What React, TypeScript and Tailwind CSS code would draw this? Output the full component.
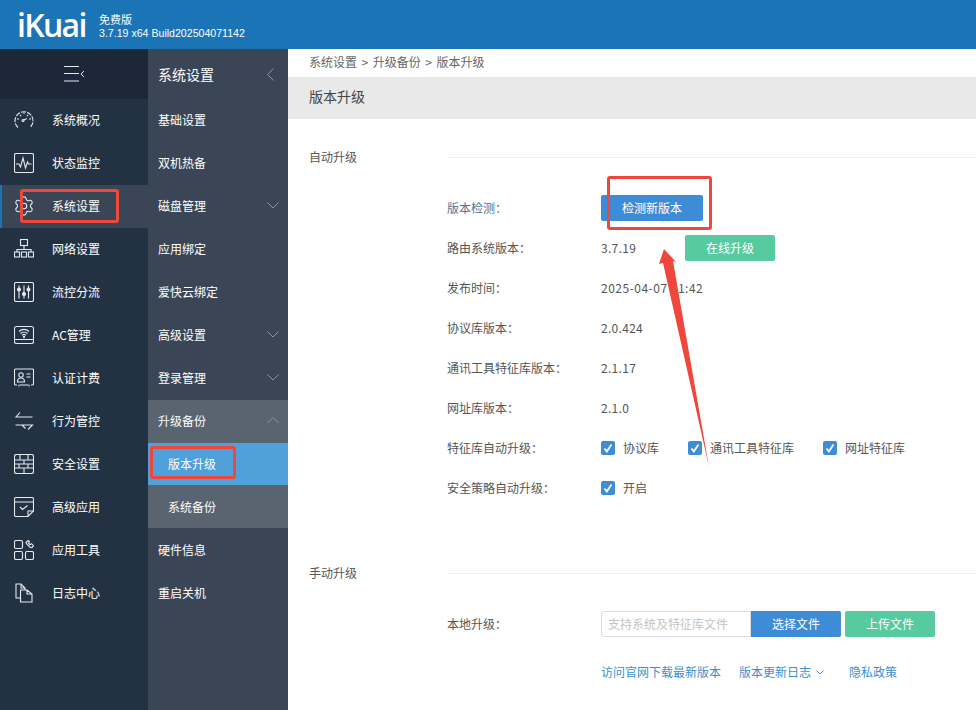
import React from "react";
import { Settings } from "lucide-react";

const S = { fill: "none", stroke: "#e6e9ee", strokeWidth: 1.1 } as const;

function Ico({ children }: { children: React.ReactNode }) {
  return (
    <svg width="20" height="20" viewBox="0 0 20 20" {...S} className="shrink-0">
      {children}
    </svg>
  );
}

const icons: React.ReactNode[] = [
  <Ico key="0"><path d="M4 17.500 A9 9 0 1 1 16 17.500" strokeDasharray="5 1.200" /><path d="M3 9h2M6 5l1.200 1.200M10 2.500V4M14 5l-1 1M17 9h-2" /><circle cx="9" cy="10.500" r="1" /><path d="M9.800 10l3-1.500" /></Ico>,
  <Ico key="1"><rect x="0.500" y="0.500" width="19" height="19" rx="1.500" /><path d="M2 11h3l1.500 3 2.500-9 2.500 10 2-6 1 2h3" /></Ico>,
  <Settings key="2" size={22} strokeWidth={1.2} color="#e6e9ee" className="shrink-0 -mx-[1px]" />,
  <Ico key="3"><rect x="6.500" y="0.500" width="7" height="6" /><path d="M10 6.500v3.500M3 13v-2.500h14V13" /><rect x="0.500" y="13" width="5" height="5" /><rect x="7.500" y="13" width="5" height="5" /><rect x="14.500" y="13" width="5" height="5" /></Ico>,
  <Ico key="4"><rect x="0.500" y="0.500" width="19" height="19" rx="1.500" /><path d="M5 3.500v13M10 3.500v13M14.500 3.500v13" /><circle cx="5" cy="7.500" r="1.500" fill="#e6e9ee" /><circle cx="10" cy="12" r="1.500" fill="#e6e9ee" /><circle cx="14.500" cy="7.500" r="1.500" fill="#e6e9ee" /></Ico>,
  <Ico key="5"><rect x="0.500" y="1.500" width="19" height="17" rx="2" /><path d="M0.500 14.500h19M5 6.500a7 7 0 0 1 10 0M6.500 8.500a5 5 0 0 1 7 0M8 10.300a3 3 0 0 1 4 0" /><circle cx="10" cy="12" r=".6" /></Ico>,
  <Ico key="6"><path d="M3 17H1.500a1 1 0 0 1-1-1V2a1 1 0 0 1 1-1h17a1 1 0 0 1 1 1v14a1 1 0 0 1-1 1H17M6 17h8M5 18.500v-2M15 18.500v-2" /><circle cx="7" cy="7" r="2.200" /><path d="M3.500 14c0-3 1.500-4 3.500-4s3.500 1 3.500 4zM12.500 6h4M12.500 9h4" /></Ico>,
  <Ico key="7"><path d="M6 1.500l-4 4.500h16.500M14 18.500l4.500-4.500H1.500M8 14l3.500 3.500" /></Ico>,
  <Ico key="8"><rect x="0.500" y="0.500" width="19" height="19" rx="2" /><path d="M0.500 6h19M0.500 10h19M0.500 14h19M6 .5V6M14 .5V6M10 6v4M5 10v4M14 10v4M10 14v5.500" /></Ico>,
  <Ico key="9"><path d="M14 19.500H2a1.500 1.500 0 0 1-1.500-1.500V2A1.500 1.500 0 0 1 2 .5h16A1.500 1.500 0 0 1 19.500 2v12z M14 19.500v-5.500h5.500M.5 5h19M6 10l2.500 2.500 5-4" /></Ico>,
  <Ico key="10"><rect x="0.500" y="0.500" width="8" height="8" rx="1.500" /><rect x="0.500" y="11.500" width="8" height="8" rx="1.500" /><rect x="11.500" y="11.500" width="8" height="8" rx="1.500" /><path d="M12 2.500l2-2 1.500 1.200-1 1.500 1.500 1.500 1.500-1 2 2-1.500 2-2-.5-3-3z" /></Ico>,
  <Ico key="11"><path d="M6.500 15H2V1h5l4 4v2M7 1v4h4" /><path d="M6.500 7H13l5 4v8H6.500zM13 7v4h5" /></Ico>,
];

const mainMenu = ["系统概况", "状态监控", "系统设置", "网络设置", "流控分流", "AC管理", "认证计费", "行为管控", "安全设置", "高级应用", "应用工具", "日志中心"];

function Chevron({ dir }: { dir: "down" | "up" | "left" }) {
  if (dir === "left")
    return (
      <svg width="7" height="13" viewBox="0 0 7 13" fill="none" stroke="#8c96a3" strokeWidth="1"><path d="M6.500.5L.5 6.500l6 6" /></svg>
    );
  const d = dir === "down" ? "M.5 .5L6 6l5.500-5.500" : "M.5 6L6 .5 11.500 6";
  return (
    <svg width="12" height="7" viewBox="0 0 12 7" fill="none" stroke="#8c96a3" strokeWidth="1"><path d={d} /></svg>
  );
}

function SubRow({ label, chevron, up }: { label: string; chevron?: boolean; up?: boolean }) {
  return (
    <div className={up ? "h-[43px] flex items-center justify-between pl-[10px] pr-[9px] pb-[2px] text-white" : "h-[43px] flex items-center justify-between pl-[10px] pr-[9px] text-white"}>
      <span>{label}</span>
      {chevron && <Chevron dir="down" />}
    </div>
  );
}

function InfoRow({ label, color, children }: { label: string; color?: string; children: React.ReactNode }) {
  return (
    <div className="h-[40px] flex items-center">
      <div className={`w-[154px] shrink-0 ${color ?? "text-[#555]"}`}>{label}</div>
      {children}
    </div>
  );
}

function Check({ label, w }: { label: string; w: string }) {
  return (
    <div className={`flex items-center gap-[8px] ${w}`}>
      <span className="w-[14px] h-[14px] rounded-[2px] bg-[#3f8cd6] flex items-center justify-center shrink-0">
        <svg width="10" height="10" viewBox="0 0 10 10" fill="none" stroke="#fff" strokeWidth="1.800"><path d="M1.500 5.500l2.300 3L8.500 1.500" /></svg>
      </span>
      <span className="text-[#555]">{label}</span>
    </div>
  );
}

function Section({ title }: { title: string }) {
  return (
    <div className="flex items-center h-[20px] pl-[21px]">
      <span className="w-[139px] shrink-0 text-[#555]">{title}</span>
      <div className="flex-1 border-t border-[#eeeeee]" />
    </div>
  );
}

export default function App() {
  return (
    <div className="relative w-[976px] h-[710px] overflow-hidden bg-white text-[12px] font-['Noto_Sans_CJK_SC','Noto_Sans',sans-serif]">
      <header className="h-[49px] bg-[#1b74b5] flex items-center pl-[17px] text-white">
        <div className="w-[82px] font-['Open_Sans',sans-serif] text-[32px] leading-none font-semibold tracking-[-1.700px]">iKuai</div>
        <div className="text-[11px] leading-[14px] mt-[2px]">
          <div>免费版</div>
          <div className="font-['Liberation_Sans',sans-serif] text-[10.600px]">3.7.19 x64 Build202504071142</div>
        </div>
      </header>
      <div className="flex h-[661px]">
        <nav className="w-[148px] shrink-0 bg-[#233243] text-white">
          <div className="h-[50px] bg-[#1c2837] flex items-center justify-center">
            <svg width="21" height="16" viewBox="0 0 21 16" fill="none" stroke="#e6e9ee" strokeWidth="1">
              <path d="M0 .5h15M0 7.500h15M0 15h15M20 5l-3 3 3 3" />
            </svg>
          </div>
          {mainMenu.map((m, i) => (
            <div
              key={m}
              className={
                i === 2
                  ? "h-[43px] flex items-center pl-[12px] pb-[2px] gap-[18px] bg-[#3a4555] border-l-2 border-[#1b74b5]"
                  : "h-[43px] flex items-center pl-[14px] pb-[2px] gap-[18px]"
              }
            >
              {icons[i]}
              <span>{m}</span>
            </div>
          ))}
        </nav>
        <aside className="w-[140px] shrink-0 bg-[#3a4555] text-white">
          <div className="h-[50px] flex items-center justify-between pl-[10px] pr-[14px] text-[14px]">
            <span>系统设置</span>
            <Chevron dir="left" />
          </div>
          <SubRow up label="基础设置" />
          <SubRow up label="双机热备" />
          <SubRow up label="磁盘管理" chevron />
          <SubRow up label="应用绑定" />
          <SubRow up label="爱快云绑定" />
          <SubRow up label="高级设置" chevron />
          <SubRow up label="登录管理" chevron />
          <div className="bg-[#5a6471]">
            <div className="h-[43px] flex items-center justify-between pl-[10px] pr-[9px] pb-[2px]">
              <span>升级备份</span>
              <Chevron dir="up" />
            </div>
            <div className="h-[42px] flex items-center pl-[20px] bg-[#50a0dc]">版本升级</div>
            <div className="h-[43px] flex items-center pl-[20px]">系统备份</div>
          </div>
          <SubRow label="硬件信息" />
          <SubRow label="重启关机" />
        </aside>
        <main className="flex-1 min-w-0 text-[#555]">
          <div className="h-[28px] flex items-center pl-[21px] pb-[2px] gap-[4.500px] text-[#666]">
            <span>系统设置</span><span>&gt;</span><span>升级备份</span><span>&gt;</span><span>版本升级</span>
          </div>
          <div className="h-[42px] bg-[#e9e9e9] flex items-center pl-[21px] pb-[3px] text-[14px] text-[#444]">版本升级</div>
          <div className="pt-[28px]">
            <Section title="自动升级" />
            <div className="pl-[159px] pt-[21px]">
              <InfoRow label="版本检测：" color="text-[#4f7396]">
                <button className="w-[102px] h-[26px] rounded-[2px] bg-[#3f8cd6] text-white">检测新版本</button>
              </InfoRow>
              <InfoRow label="路由系统版本：">
                <span className="w-[84px] tracking-[0.3px]">3.7.19</span>
                <button className="w-[90px] h-[26px] rounded-[2px] bg-[#57cb9f] text-white">在线升级</button>
              </InfoRow>
              <InfoRow label="发布时间："><span className="tracking-[0.5px]">2025-04-07 11:42</span></InfoRow>
              <InfoRow label="协议库版本："><span className="tracking-[0.3px]">2.0.424</span></InfoRow>
              <InfoRow label="通讯工具特征库版本："><span className="tracking-[0.3px]">2.1.17</span></InfoRow>
              <InfoRow label="网址库版本："><span className="tracking-[0.3px]">2.1.0</span></InfoRow>
              <InfoRow label="特征库自动升级：">
                <Check label="协议库" w="w-[87px]" />
                <Check label="通讯工具特征库" w="w-[135px]" />
                <Check label="网址特征库" w="" />
              </InfoRow>
              <InfoRow label="安全策略自动升级：">
                <Check label="开启" w="" />
              </InfoRow>
            </div>
            <div className="pt-[55px]">
              <Section title="手动升级" />
            </div>
            <div className="pl-[159px] pt-[28px]">
              <div className="flex items-center h-[26px]">
                <div className="w-[154px] shrink-0">本地升级：</div>
                <div className="w-[150px] h-[26px] border border-[#dddddd] rounded-l-[2px] flex items-center pl-[6px] text-[#c4c4c4]">支持系统及特征库文件</div>
                <button className="w-[90px] h-[26px] bg-[#3f8cd6] text-white rounded-r-[2px]">选择文件</button>
                <button className="w-[90px] h-[26px] ml-[4px] bg-[#57cb9f] text-white rounded-[2px]">上传文件</button>
              </div>
              <div className="flex items-center pl-[154px] pt-[26px] text-[#3b8fd0]">
                <span className="w-[138px]">访问官网下载最新版本</span>
                <span className="w-[110px] flex items-center gap-[5px]">
                  版本更新日志
                  <svg width="8" height="5" viewBox="0 0 8 5" fill="none" stroke="#3b8fd0"><path d="M.5.5L4 4 7.500.5" /></svg>
                </span>
                <span>隐私政策</span>
              </div>
            </div>
          </div>
        </main>
      </div>
      <div className="absolute left-[20px] top-[189px] w-[99px] h-[34px] border-[3px] border-[#f0473c] rounded-[3px]" />
      <div className="absolute left-[607px] top-[176px] w-[105px] h-[54px] border-[3px] border-[#f0473c] rounded-[3px]" />
      <div className="absolute left-[150px] top-[446px] w-[86px] h-[33px] border-[3px] border-[#f0473c] rounded-[3px]" />
      <svg className="absolute left-[650px] top-[245px]" width="65" height="225" viewBox="0 0 65 225">
        <path d="M14 4 L26 17 L23 16 L59 222 L13 18 L9 19 Z" fill="#f0473c" />
      </svg>
    </div>
  );
}
